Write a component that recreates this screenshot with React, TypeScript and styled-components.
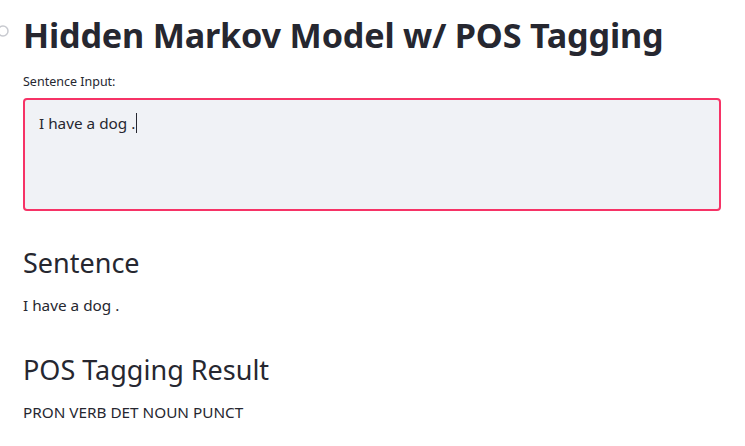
import React from "react";
import styled, { createGlobalStyle } from "styled-components";

const Global = createGlobalStyle`
  html, body { margin: 0; padding: 0; background: #ffffff; }
  body { font-family: "Noto Sans", "Liberation Sans", sans-serif; color: #262730; overflow: hidden; }
`;

const Page = styled.main`
  width: 745px;
  height: 446px;
  box-sizing: border-box;
  padding: 8px 24px 0 23px;
  display: flex;
  flex-direction: column;
`;

const TitleRow = styled.div`
  position: relative;
`;

const Anchor = styled.svg`
  position: absolute;
  left: -28px;
  top: 15px;
`;

const Title = styled.h1`
  margin: 0;
  font-size: 34.2px;
  font-weight: 700;
  line-height: 54px;
  letter-spacing: -0.2px;
  color: #262730;
`;

const Label = styled.label`
  display: block;
  margin-top: 12px;
  font-size: 12.5px;
  line-height: 16px;
  color: #262730;
`;

const InputBox = styled.div`
  margin-top: 8px;
  height: 113px;
  box-sizing: border-box;
  border: 2px solid #f63366;
  border-radius: 4px;
  background: #f0f2f6;
  padding: 12px 14px 11px;
  font-size: 15.3px;
  line-height: 22px;
  color: #262730;
`;

const Caret = styled.span`
  display: inline-block;
  width: 1px;
  height: 20px;
  background: #262730;
  vertical-align: -4px;
  margin-left: 1px;
`;

const SubHeader = styled.h2<{ $top: number }>`
  margin: ${(p) => p.$top}px 0 0;
  font-size: 27px;
  font-weight: 400;
  line-height: 36px;
  color: #262730;
`;

const Text = styled.p<{ $top: number }>`
  margin: ${(p) => p.$top}px 0 0;
  font-size: 15.3px;
  line-height: 24px;
  color: #262730;
`;

export default function App() {
  return (
    <>
      <Global />
      <Page>
        <TitleRow>
          <Anchor width="16" height="16" viewBox="0 0 16 16">
            <circle cx="8" cy="8" r="5" fill="none" stroke="#c8cad0" strokeWidth="1.5" />
          </Anchor>
          <Title>Hidden Markov Model w/ POS Tagging</Title>
        </TitleRow>
        <Label>Sentence Input:</Label>
        <InputBox>
          I have a dog .<Caret />
        </InputBox>
        <SubHeader $top={34}>Sentence</SubHeader>
        <Text $top={12}>I have a dog .</Text>
        <SubHeader $top={35}>POS Tagging Result</SubHeader>
        <Text $top={12}>PRON VERB DET NOUN PUNCT</Text>
      </Page>
    </>
  );
}
